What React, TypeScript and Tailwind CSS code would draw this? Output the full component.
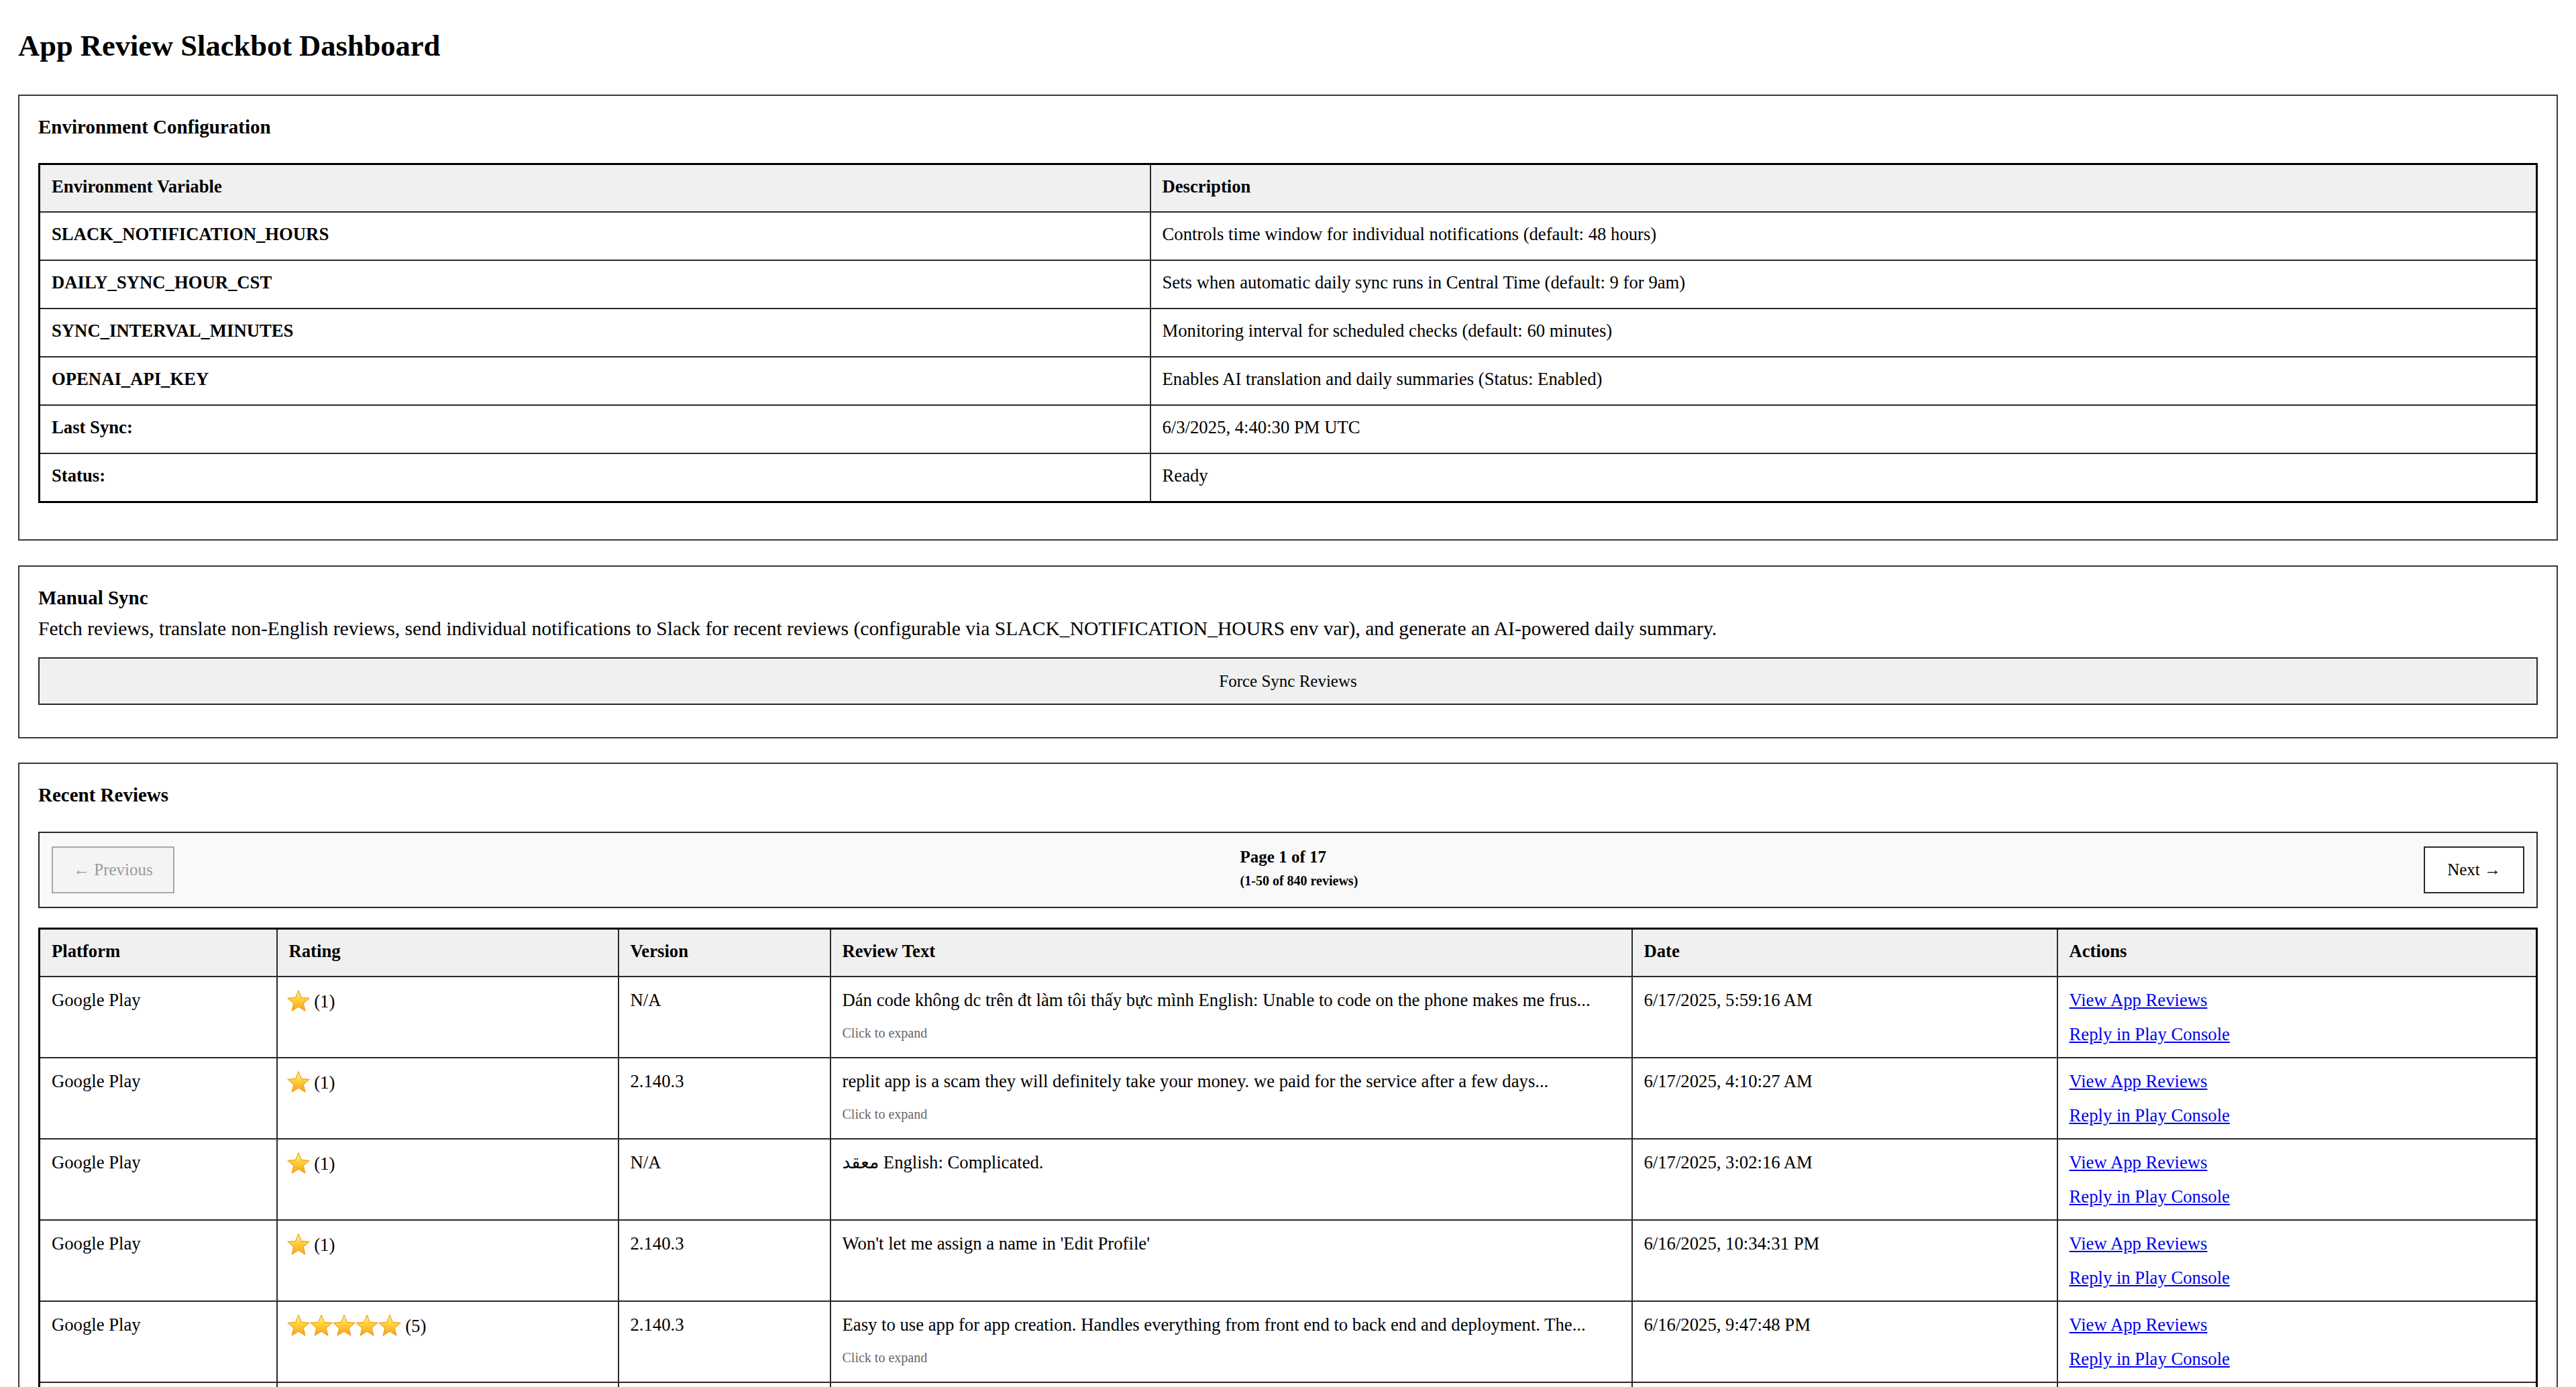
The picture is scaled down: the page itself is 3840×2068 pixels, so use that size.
import React from "react";

type Review = {
    platform: string;
    rating: number;
    version: string;
    text: string;
    expandable: boolean;
    date: string;
};

const envRows: { name: string; value: string }[] = [
    { name: "SLACK_NOTIFICATION_HOURS", value: "Controls time window for individual notifications (default: 48 hours)" },
    { name: "DAILY_SYNC_HOUR_CST", value: "Sets when automatic daily sync runs in Central Time (default: 9 for 9am)" },
    { name: "SYNC_INTERVAL_MINUTES", value: "Monitoring interval for scheduled checks (default: 60 minutes)" },
    { name: "OPENAI_API_KEY", value: "Enables AI translation and daily summaries (Status: Enabled)" },
    { name: "Last Sync:", value: "6/3/2025, 4:40:30 PM UTC" },
    { name: "Status:", value: "Ready" },
];

const reviews: Review[] = [
    {
        platform: "Google Play",
        rating: 1,
        version: "N/A",
        text: "Dán code không dc trên đt làm tôi thấy bực mình English: Unable to code on the phone makes me frus...",
        expandable: true,
        date: "6/17/2025, 5:59:16 AM",
    },
    {
        platform: "Google Play",
        rating: 1,
        version: "2.140.3",
        text: "replit app is a scam they will definitely take your money. we paid for the service after a few days...",
        expandable: true,
        date: "6/17/2025, 4:10:27 AM",
    },
    {
        platform: "Google Play",
        rating: 1,
        version: "N/A",
        text: "معقد English: Complicated.",
        expandable: false,
        date: "6/17/2025, 3:02:16 AM",
    },
    {
        platform: "Google Play",
        rating: 1,
        version: "2.140.3",
        text: "Won't let me assign a name in 'Edit Profile'",
        expandable: false,
        date: "6/16/2025, 10:34:31 PM",
    },
    {
        platform: "Google Play",
        rating: 5,
        version: "2.140.3",
        text: "Easy to use app for app creation. Handles everything from front end to back end and deployment. The...",
        expandable: true,
        date: "6/16/2025, 9:47:48 PM",
    },
    {
        platform: "Google Play",
        rating: 2,
        version: "2.140.3",
        text: "The agent keeps getting stuck in a loop and burns through checkpoints without fixing anything...",
        expandable: true,
        date: "6/16/2025, 7:21:05 PM",
    },
];

function Star() {
    return (
        <svg viewBox="0 0.3 24 22.8" className="inline-block w-[34px] h-[32px] align-[-6px]">
            <defs>
                <linearGradient id="starFill" x1="0" y1="0" x2="0" y2="1">
                    <stop offset="0%" stopColor="#fff6b5" />
                    <stop offset="40%" stopColor="#ffd43f" />
                    <stop offset="100%" stopColor="#f6a21b" />
                </linearGradient>
            </defs>
            <path
                d="M12 0.8L15.17 8.43L23.41 9.09L17.14 14.47L19.05 22.51L12 18.2L4.95 22.51L6.86 14.47L0.59 9.09L8.83 8.43Z"
                fill="url(#starFill)"
                stroke="#efa01c"
                strokeWidth="0.8"
                strokeLinejoin="round"
            />
        </svg>
    );
}

function Stars({ count }: { count: number }) {
    return (
        <span className="-ml-[3px] whitespace-nowrap">
            {Array.from({ length: count }).map((_, i) => (
                <Star key={i} />
            ))}{" "}
            ({count})
        </span>
    );
}

function Section({ title, children, className = "" }: { title: string; children: React.ReactNode; className?: string }) {
    return (
        <section className={`border-2 border-[#3a3a3a] px-[28px] pt-[30px] pb-[28px] ${className}`}>
            <h3 className="text-[29px] leading-[33px] font-bold">{title}</h3>
            {children}
        </section>
    );
}

const th = "bg-[#f0f0f0] border-2 border-[#2a2a2a] px-[17px] pt-[17px] pb-[21px] text-left font-bold align-top";
const td = "border-2 border-[#2a2a2a] px-[17px] align-top";

export default function App() {
    return (
        <div className="min-h-screen bg-white px-[27px] pt-[43px] pb-[40px] text-black text-[26.7px] leading-[31px] font-['Liberation_Serif','DejaVu_Sans',serif]">
            <h1 className="text-[44.5px] leading-[51px] font-bold mb-[47px]">App Review Slackbot Dashboard</h1>

            <Section title="Environment Configuration" className="mb-[37px]">
                <table className="w-full table-fixed border-collapse border-[3px] border-black mt-[37px] mb-[26px]">
                    <thead>
                        <tr>
                            <th className={`${th} w-[1656px]`}>Environment Variable</th>
                            <th className={th}>Description</th>
                        </tr>
                    </thead>
                    <tbody>
                        {envRows.map((row) => (
                            <tr key={row.name}>
                                <td className={`${td} pt-[17px] pb-[22px] font-bold`}>{row.name}</td>
                                <td className={`${td} pt-[17px] pb-[22px]`}>{row.value}</td>
                            </tr>
                        ))}
                    </tbody>
                </table>
            </Section>

            <Section title="Manual Sync" className="mb-[36px]">
                <p className="mt-[12px] text-[29.6px] leading-[34px]">
                    Fetch reviews, translate non-English reviews, send individual notifications to Slack for recent
                    reviews (configurable via SLACK_NOTIFICATION_HOURS env var), and generate an AI-powered daily
                    summary.
                </p>
                <button className="w-full mt-[26px] mb-[20px] bg-[#f0f0f0] border-2 border-[#2a2a2a] py-[19px] text-[25px] leading-[29px] text-center">
                    Force Sync Reviews
                </button>
            </Section>

            <Section title="Recent Reviews">
                <div className="mt-[38px] mb-[29px] flex items-center justify-between bg-[#f9f9f9] border-2 border-[#2a2a2a] px-[18px] py-[20px]">
                    <button
                        disabled
                        className="border-2 border-[#a8a8a8] bg-[#f4f4f4] text-[#9a9a9a] px-[30px] py-[18px] text-[25px] leading-[30px]"
                    >
                        ← Previous
                    </button>
                    <div className="flex flex-col gap-[10px] mb-[6px]">
                        <span className="text-[25px] leading-[29px] font-bold">Page 1 of 17</span>
                        <span className="text-[20px] leading-[23px] font-bold">(1-50 of 840 reviews)</span>
                    </div>
                    <button className="border-2 border-[#2a2a2a] bg-white text-black px-[33px] py-[18px] text-[25px] leading-[30px]">
                        Next →
                    </button>
                </div>

                <table className="w-full table-fixed border-collapse border-[3px] border-black">
                    <thead>
                        <tr>
                            <th className={`${th} w-[354px]`}>Platform</th>
                            <th className={`${th} w-[509px]`}>Rating</th>
                            <th className={`${th} w-[316px]`}>Version</th>
                            <th className={`${th} w-[1195px]`}>Review Text</th>
                            <th className={`${th} w-[634px]`}>Date</th>
                            <th className={th}>Actions</th>
                        </tr>
                    </thead>
                    <tbody>
                        {reviews.map((r, i) => (
                            <tr key={i}>
                                <td className={`${td} pt-[19px] pb-[18px]`}>{r.platform}</td>
                                <td className={`${td} pt-[19px] pb-[18px]`}>
                                    <Stars count={r.rating} />
                                </td>
                                <td className={`${td} pt-[19px] pb-[18px]`}>{r.version}</td>
                                <td className={`${td} pt-[19px] pb-[18px]`}>
                                    <div>{r.text}</div>
                                    {r.expandable && (
                                        <div className="mt-[22px] text-[20px] leading-[23px] text-[#666]">Click to expand</div>
                                    )}
                                </td>
                                <td className={`${td} pt-[19px] pb-[18px]`}>{r.date}</td>
                                <td className={`${td} pt-[19px] pb-[18px]`}>
                                    <div className="flex flex-col items-start gap-[20px]">
                                        <a href="#" className="text-[#0000ee] underline">
                                            View App Reviews
                                        </a>
                                        <a href="#" className="text-[#0000ee] underline">
                                            Reply in Play Console
                                        </a>
                                    </div>
                                </td>
                            </tr>
                        ))}
                    </tbody>
                </table>
            </Section>
        </div>
    );
}
